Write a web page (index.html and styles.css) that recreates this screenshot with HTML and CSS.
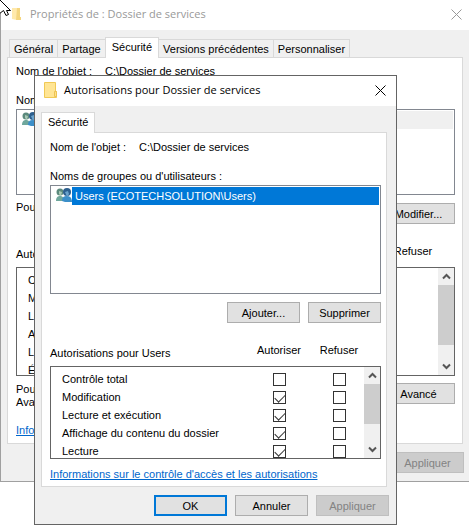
FILE: index.html
```html
<!DOCTYPE html>
<html lang="fr">
<head>
<meta charset="utf-8">
<title>Autorisations pour Dossier de services</title>
<link rel="stylesheet" href="styles.css">
</head>
<body>
<svg class="defs" aria-hidden="true">
  <symbol id="folder" viewBox="0 0 14 16">
    <path d="M.5.5h11v9h1v6H.5z" fill="#ffe594" stroke="#f0c955"/>
    <path d="M10.500 9.500h2v5h-2z" fill="#ffe08a" stroke="#edc352"/>
  </symbol>
  <symbol id="folder-open" viewBox="0 0 14 16">
    <path d="M2 2h5v12l-5-1z" fill="#ffe08a"/>
    <path d="M7 2h3v9h1v3H6z" fill="#f2c64a"/>
  </symbol>
  <symbol id="users" viewBox="0 0 16 14">
    <path d="M0 13c0-4 2-5 4-5s4 1 4 5z" fill="#6fa79c"/>
    <circle cx="4" cy="4" r="3.500" fill="#5c8a7d"/>
    <path d="M3 3l3 1-1 4-2-2z" fill="#a8c8b4"/>
    <path d="M6 13c0-4 2-5 5-5s5 2 5 6H9z" fill="#3c8fc9"/>
    <circle cx="11" cy="4" r="4" fill="#2d5f8e"/>
    <path d="M9 4l3-1 1 3-2 3z" fill="#6aa3cc"/>
  </symbol>
  <symbol id="close" viewBox="0 0 11 11">
    <path d="M.5.5l10 10M10.500.500l-10 10" fill="none" stroke="currentColor"/>
  </symbol>
  <symbol id="up" viewBox="0 0 9 7">
    <path d="M1 5.500l3.500-3.500 3.500 3.500" fill="none" stroke="#555" stroke-width="2"/>
  </symbol>
  <symbol id="down" viewBox="0 0 9 7">
    <path d="M1 1.500l3.500 3.500 3.500-3.500" fill="none" stroke="#555" stroke-width="2"/>
  </symbol>
</svg>

<main class="desktop">
  <section class="window window-back" aria-label="Propriétés de : Dossier de services">
    <header class="titlebar">
      <svg class="folder"><use href="#folder-open"/></svg>
      <h1>Propriétés de : Dossier de services</h1>
      <button class="close" type="button" aria-label="Fermer"><svg><use href="#close"/></svg></button>
    </header>
    <nav class="tabs">
      <button class="tab" type="button">Général</button>
      <button class="tab" type="button">Partage</button>
      <button class="tab selected" type="button">Sécurité</button>
      <button class="tab" type="button">Versions précédentes</button>
      <button class="tab" type="button">Personnaliser</button>
    </nav>
    <div class="panel">
      <p class="object"><span>Nom de l'objet :</span><span>C:\Dossier de services</span></p>
      <p class="caption">Noms</p>
      <div class="list groups">
        <div class="group"><svg class="users"><use href="#users"/></svg><span></span></div>
      </div>
      <div class="edit-row"><p>Pour</p><button class="button" type="button">Modifier...</button></div>
      <div class="heads"><span class="heads-title">Auto</span><span class="head">Refuser</span></div>
      <div class="list rights">
        <ul class="names"><li>Co</li><li>Mo</li><li>Le</li><li>Af</li><li>Le</li><li>Éc</li></ul>
        <div class="scrollbar"><svg><use href="#up"/></svg><i></i><svg><use href="#down"/></svg></div>
      </div>
      <div class="advanced-row"><p>Pour<br>Avan</p><button class="button" type="button">Avancé</button></div>
      <a class="info" href="#">Infor</a>
    </div>
    <footer class="actions"><button class="button" type="button" disabled>Appliquer</button></footer>
  </section>

  <section class="window window-front" role="dialog" aria-label="Autorisations pour Dossier de services">
    <header class="titlebar">
      <svg class="folder"><use href="#folder"/></svg>
      <h2>Autorisations pour Dossier de services</h2>
      <button class="close" type="button" aria-label="Fermer"><svg><use href="#close"/></svg></button>
    </header>
    <nav class="tabs"><button class="tab selected" type="button">Sécurité</button></nav>
    <div class="panel">
      <p class="object"><span>Nom de l'objet :</span><span>C:\Dossier de services</span></p>
      <p class="caption">Noms de groupes ou d'utilisateurs :</p>
      <div class="list groups">
        <div class="group active"><svg class="users"><use href="#users"/></svg><span>Users (ECOTECHSOLUTION\Users)</span></div>
      </div>
      <div class="edit-row"><button class="button" type="button">Ajouter...</button><button class="button" type="button">Supprimer</button></div>
      <div class="heads"><span class="heads-title">Autorisations pour Users</span><span class="head">Autoriser</span><span class="head">Refuser</span></div>
      <div class="list rights">
        <table>
          <tr><th scope="row">Contrôle total</th><td><input type="checkbox" aria-label="Autoriser Contrôle total"></td><td><input type="checkbox" aria-label="Refuser Contrôle total"></td></tr>
          <tr><th scope="row">Modification</th><td><input type="checkbox" checked aria-label="Autoriser Modification"></td><td><input type="checkbox" aria-label="Refuser Modification"></td></tr>
          <tr><th scope="row">Lecture et exécution</th><td><input type="checkbox" checked aria-label="Autoriser Lecture et exécution"></td><td><input type="checkbox" aria-label="Refuser Lecture et exécution"></td></tr>
          <tr><th scope="row">Affichage du contenu du dossier</th><td><input type="checkbox" checked aria-label="Autoriser Affichage du contenu du dossier"></td><td><input type="checkbox" aria-label="Refuser Affichage du contenu du dossier"></td></tr>
          <tr><th scope="row">Lecture</th><td><input type="checkbox" checked aria-label="Autoriser Lecture"></td><td><input type="checkbox" aria-label="Refuser Lecture"></td></tr>
        </table>
        <div class="scrollbar"><svg><use href="#up"/></svg><i></i><svg><use href="#down"/></svg></div>
      </div>
      <a class="info" href="#">Informations sur le contrôle d'accès et les autorisations</a>
    </div>
    <footer class="actions">
      <button class="button default" type="button">OK</button>
      <button class="button" type="button">Annuler</button>
      <button class="button" type="button" disabled>Appliquer</button>
    </footer>
  </section>

  <svg class="cursor" viewBox="0 0 12 16" aria-hidden="true"><path d="M-3-3L10.500 10.500H6.500L8.500 14.500 6 15.500 3.500 10.500-1 14" fill="#fff" stroke="#000"/></svg>
</main>
</body>
</html>
```
FILE: styles.css
```css
* { box-sizing: border-box; }
body {
  margin: 0;
  background: #fff;
  color: #000;
  font: 11px/14px "Liberation Sans", Arial, sans-serif;
}
h1, h2, p, ul { margin: 0; padding: 0; }
button, input { font: inherit; color: inherit; margin: 0; }
.defs { position: absolute; width: 0; height: 0; }
.desktop { position: relative; min-height: 100vh; overflow: hidden; }

.window { background: #f0f0f0; }
.window-back { border: solid #a0a0a0; border-width: 0 0 1px 1px; padding-bottom: 8px; }
.window-front {
  position: absolute;
  top: 75px;
  left: 34px;
  right: 72px;
  border: 1px solid #646464;
  padding-bottom: 8px;
}

.titlebar {
  display: flex;
  align-items: center;
  height: 30px;
  background: #fff;
  padding: 0 7px 2px 9px;
  gap: 6px;
}
.window-front .titlebar { padding-right: 10px; }
.titlebar h1, .titlebar h2 { flex: 1; font: 11px/16px "Open Sans", sans-serif; }
.window-back h1, .window-back .close { color: #999; }
.window-back .folder { opacity: .7; }
.folder { width: 14px; height: 16px; }
.close { display: flex; padding: 0; border: 0; background: none; }
.close svg { width: 11px; height: 11px; }

.tabs { display: flex; align-items: flex-end; height: 27px; padding: 0 8px; }
.window-front .tabs { height: 26px; padding: 0 6px; }
.tab {
  height: 18px;
  padding: 0 4px;
  border: 1px solid #d9d9d9;
  border-bottom: 0;
  border-right: 0;
  background: #f0f0f0;
  white-space: nowrap;
}
.tab:last-child { border-right: 1px solid #d9d9d9; }
.tab.selected {
  height: 21px;
  margin-bottom: -1px;
  padding: 0 6px 2px;
  border-right: 1px solid #d9d9d9;
  background: #fff;
  z-index: 1;
}
.selected + .tab { border-left: 0; }

.panel {
  display: flex;
  flex-direction: column;
  margin: 0 6px;
  padding: 6px 7px 6px 8px;
  border: 1px solid #d9d9d9;
  background: #fff;
}
.window-front .panel { margin: 0 9px 0 6px; padding: 7px 5px 5px 8px; }
.object { display: flex; }
.object span:first-child { width: 89px; }
.caption { margin: 15px 0 2px; }
.list { border: 1px solid #828790; overflow: hidden; }
.groups { height: 86px; padding: 1px; }
.window-front .groups { height: 109px; }
.group { display: flex; height: 18px; padding-left: 4px; }
.group span { flex: 1; background: #f0f0f0; padding: 2px 3px 0; }
.group.active span { background: #0078d7; color: #fff; }
.users { width: 16px; height: 16px; }

.button {
  width: 73px;
  height: 21px;
  padding: 0;
  border: 1px solid #adadad;
  background: #e1e1e1;
}
.button.default { border: 2px solid #0078d7; }
.button:disabled { background: #ccc; border-color: #bfbfbf; color: #838383; }
.edit-row { display: flex; align-items: flex-end; gap: 8px; height: 24px; margin-top: 5px; justify-content: flex-end; }
.edit-row p { flex: 1; align-self: flex-start; }
.heads { display: flex; height: 43px; padding: 20px 12px 0 0; }
.heads-title { flex: 1; padding-top: 3px; }
.head { width: 60px; text-align: center; }
.rights { display: flex; height: 93px; border-color: #646464; }
.window-back .rights { height: 109px; }
.names { flex: 1; padding: 3px 11px; list-style: none; line-height: 18px; }
.rights table { flex: 1; align-self: flex-start; border-collapse: collapse; margin-top: 3px; }
.rights tr { height: 18px; }
.rights th { padding: 0 0 0 11px; font-weight: normal; text-align: left; }
.rights td { width: 60px; padding: 0 0 0 10px; }
.rights input {
  display: block;
  appearance: none;
  width: 13px;
  height: 13px;
  margin: auto;
  border: 1px solid #333;
  background: #fff;
}
.rights input:checked::before {
  content: "";
  display: block;
  width: 9px;
  height: 5px;
  margin: 2px 1px;
  border: solid #333;
  border-width: 0 0 1px 1px;
  transform: rotate(-45deg);
}
.scrollbar {
  display: flex;
  flex-direction: column;
  width: 16px;
  background: #f0f0f0;
}
.scrollbar svg { width: 9px; height: 7px; margin: 5px auto; }
.scrollbar i { height: 40px; background: #cdcdcd; margin-bottom: auto; }
.window-back .scrollbar i { height: 60px; }
.advanced-row { display: flex; justify-content: space-between; margin-top: 7px; }
.advanced-row p { line-height: 13px; }
.info { align-self: flex-start; color: #0066cc; margin-top: 8px; }
.window-back .info { margin-top: 14px; }
.actions { display: flex; justify-content: flex-end; gap: 8px; padding: 8px 7px 0; }
.window-back .actions { padding-right: 5px; }

.cursor { position: absolute; top: 0; left: 0; width: 12px; height: 16px; }
```
